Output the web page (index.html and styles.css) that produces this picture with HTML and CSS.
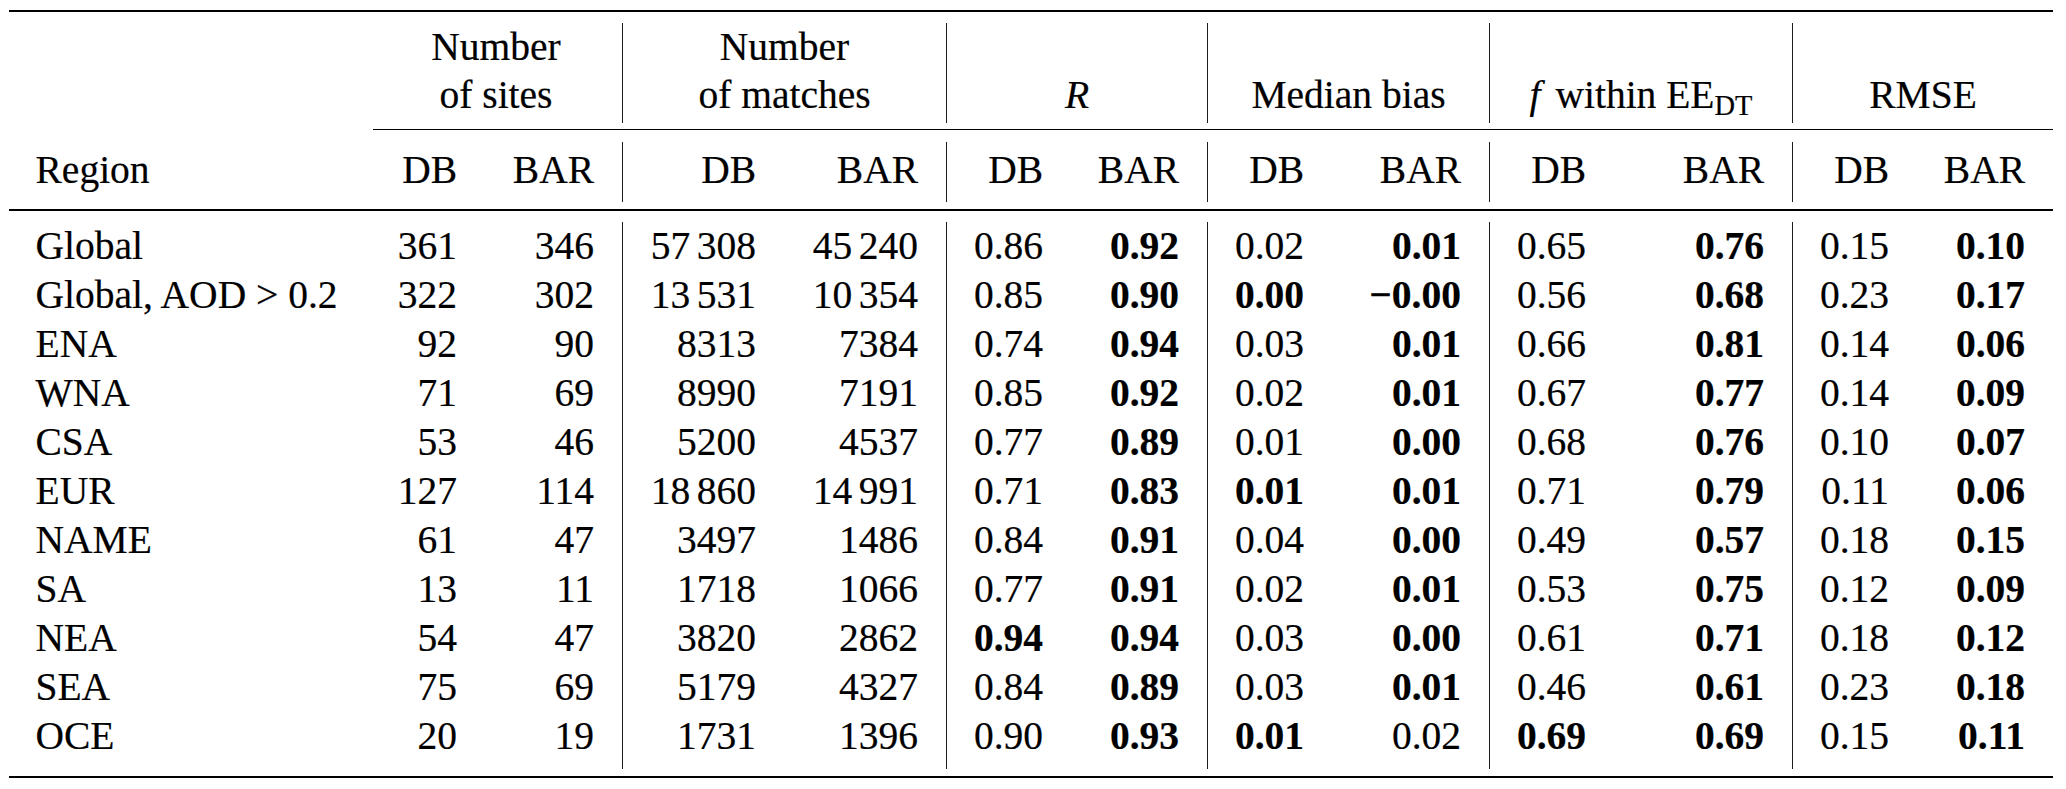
FILE: index.html
```html
<!DOCTYPE html>
<html lang="en">
<head>
<meta charset="utf-8">
<title>Regional validation statistics</title>
<link rel="stylesheet" href="styles.css">
</head>
<body>
<div class="page">
  <div class="table">
    <div class="rule thick"></div>

    <div class="grid head1">
      <div class="grp"></div>
      <div class="grp span"><span class="gt">Number<br>of sites</span></div>
      <div class="grp span s"><span class="gt">Number<br>of matches</span></div>
      <div class="grp span s"><span class="gt"><i>R</i></span></div>
      <div class="grp span s"><span class="gt">Median bias</span></div>
      <div class="grp span s"><span class="gt"><i class="fi">f</i> within EE<sub class="sub">DT</sub></span></div>
      <div class="grp span s"><span class="gt">RMSE</span></div>
    </div>

    <div class="rule cmid"></div>

    <div class="grid head2">
      <div class="c l">Region</div>
      <div class="c">DB</div><div class="c">BAR</div>
      <div class="c s">DB</div><div class="c">BAR</div>
      <div class="c s">DB</div><div class="c">BAR</div>
      <div class="c s">DB</div><div class="c">BAR</div>
      <div class="c s">DB</div><div class="c">BAR</div>
      <div class="c s">DB</div><div class="c">BAR</div>
    </div>

    <div class="rule mid"></div>

    <div class="grid body">
      <div class="row">
        <div class="c l">Global</div>
        <div class="c">361</div><div class="c">346</div>
        <div class="c s">57<span class="gs"></span>308</div><div class="c">45<span class="gs"></span>240</div>
        <div class="c s">0.86</div><div class="c b">0.92</div>
        <div class="c s">0.02</div><div class="c b">0.01</div>
        <div class="c s">0.65</div><div class="c b">0.76</div>
        <div class="c s">0.15</div><div class="c b">0.10</div>
      </div>
      <div class="row">
        <div class="c l">Global, AOD &gt; 0.2</div>
        <div class="c">322</div><div class="c">302</div>
        <div class="c s">13<span class="gs"></span>531</div><div class="c">10<span class="gs"></span>354</div>
        <div class="c s">0.85</div><div class="c b">0.90</div>
        <div class="c s b">0.00</div><div class="c b">&minus;0.00</div>
        <div class="c s">0.56</div><div class="c b">0.68</div>
        <div class="c s">0.23</div><div class="c b">0.17</div>
      </div>
      <div class="row">
        <div class="c l">ENA</div>
        <div class="c">92</div><div class="c">90</div>
        <div class="c s">8313</div><div class="c">7384</div>
        <div class="c s">0.74</div><div class="c b">0.94</div>
        <div class="c s">0.03</div><div class="c b">0.01</div>
        <div class="c s">0.66</div><div class="c b">0.81</div>
        <div class="c s">0.14</div><div class="c b">0.06</div>
      </div>
      <div class="row">
        <div class="c l">WNA</div>
        <div class="c">71</div><div class="c">69</div>
        <div class="c s">8990</div><div class="c">7191</div>
        <div class="c s">0.85</div><div class="c b">0.92</div>
        <div class="c s">0.02</div><div class="c b">0.01</div>
        <div class="c s">0.67</div><div class="c b">0.77</div>
        <div class="c s">0.14</div><div class="c b">0.09</div>
      </div>
      <div class="row">
        <div class="c l">CSA</div>
        <div class="c">53</div><div class="c">46</div>
        <div class="c s">5200</div><div class="c">4537</div>
        <div class="c s">0.77</div><div class="c b">0.89</div>
        <div class="c s">0.01</div><div class="c b">0.00</div>
        <div class="c s">0.68</div><div class="c b">0.76</div>
        <div class="c s">0.10</div><div class="c b">0.07</div>
      </div>
      <div class="row">
        <div class="c l">EUR</div>
        <div class="c">127</div><div class="c">114</div>
        <div class="c s">18<span class="gs"></span>860</div><div class="c">14<span class="gs"></span>991</div>
        <div class="c s">0.71</div><div class="c b">0.83</div>
        <div class="c s b">0.01</div><div class="c b">0.01</div>
        <div class="c s">0.71</div><div class="c b">0.79</div>
        <div class="c s">0.11</div><div class="c b">0.06</div>
      </div>
      <div class="row">
        <div class="c l">NAME</div>
        <div class="c">61</div><div class="c">47</div>
        <div class="c s">3497</div><div class="c">1486</div>
        <div class="c s">0.84</div><div class="c b">0.91</div>
        <div class="c s">0.04</div><div class="c b">0.00</div>
        <div class="c s">0.49</div><div class="c b">0.57</div>
        <div class="c s">0.18</div><div class="c b">0.15</div>
      </div>
      <div class="row">
        <div class="c l">SA</div>
        <div class="c">13</div><div class="c">11</div>
        <div class="c s">1718</div><div class="c">1066</div>
        <div class="c s">0.77</div><div class="c b">0.91</div>
        <div class="c s">0.02</div><div class="c b">0.01</div>
        <div class="c s">0.53</div><div class="c b">0.75</div>
        <div class="c s">0.12</div><div class="c b">0.09</div>
      </div>
      <div class="row">
        <div class="c l">NEA</div>
        <div class="c">54</div><div class="c">47</div>
        <div class="c s">3820</div><div class="c">2862</div>
        <div class="c s b">0.94</div><div class="c b">0.94</div>
        <div class="c s">0.03</div><div class="c b">0.00</div>
        <div class="c s">0.61</div><div class="c b">0.71</div>
        <div class="c s">0.18</div><div class="c b">0.12</div>
      </div>
      <div class="row">
        <div class="c l">SEA</div>
        <div class="c">75</div><div class="c">69</div>
        <div class="c s">5179</div><div class="c">4327</div>
        <div class="c s">0.84</div><div class="c b">0.89</div>
        <div class="c s">0.03</div><div class="c b">0.01</div>
        <div class="c s">0.46</div><div class="c b">0.61</div>
        <div class="c s">0.23</div><div class="c b">0.18</div>
      </div>
      <div class="row">
        <div class="c l">OCE</div>
        <div class="c">20</div><div class="c">19</div>
        <div class="c s">1731</div><div class="c">1396</div>
        <div class="c s">0.90</div><div class="c b">0.93</div>
        <div class="c s b">0.01</div><div class="c">0.02</div>
        <div class="c s b">0.69</div><div class="c b">0.69</div>
        <div class="c s">0.15</div><div class="c b">0.11</div>
      </div>
    </div>

    <div class="rule thick bottom"></div>
  </div>
</div>
</body>
</html>
```

FILE: styles.css
```css
* {
  box-sizing: border-box;
  margin: 0;
  padding: 0;
}

html,
body {
  background: #ffffff;
}

body {
  font-family: "Liberation Serif", "DejaVu Serif", serif;
  font-size: 39.5px;
  color: #000000;
  -webkit-text-stroke: 0.2px #000000;
}

.page {
  padding: 10px 13px 0 9px;
}

.table {
  width: 2044px;
}

/* booktabs-style rules */
.rule {
  background: #000000;
}

.thick {
  height: 2px;
}

.bottom {
  margin-top: 7px;
}

.cmid {
  height: 1.3px;
  margin: 7px 0 0 364px;
}

.mid {
  height: 1.5px;
  margin-top: 7px;
}

/* shared column template */
.grid {
  display: grid;
  grid-template-columns: 361px 115px 137px 162px 162px 125px 136px 125px 157px 125px 178px 125px 136px;
}

.s {
  border-left: 1px solid #1c1c1c;
}

/* first header band: group titles */
.head1 {
  height: 99px;
  margin-top: 11px;
}

.grp {
  display: flex;
  flex-direction: column;
  justify-content: flex-end;
  align-items: center;
  padding-bottom: 4.3px;
}

.gt {
  display: block;
  text-align: center;
  line-height: 48px;
  white-space: nowrap;
}

.span {
  grid-column: span 2;
}

.fi {
  margin-right: 5px;
}

.sub {
  font-size: 0.72em;
  line-height: 0;
  vertical-align: -0.25em;
}

/* second header band */
.head2 {
  height: 60px;
  margin-top: 12px;
}

.head2 .c {
  line-height: 48px;
  padding-top: 3.7px;
}

/* body */
.body {
  margin-top: 11.5px;
  grid-template-rows: repeat(10, 49px) 57px;
}

.row {
  display: contents;
}

.c {
  text-align: right;
  padding-right: 28px;
  line-height: 49px;
  white-space: nowrap;
}

.c.l {
  text-align: left;
  padding-left: 26.5px;
  padding-right: 0;
}

.b {
  font-weight: 700;
}

.gs {
  display: inline-block;
  width: 0.1667em;
}
```
